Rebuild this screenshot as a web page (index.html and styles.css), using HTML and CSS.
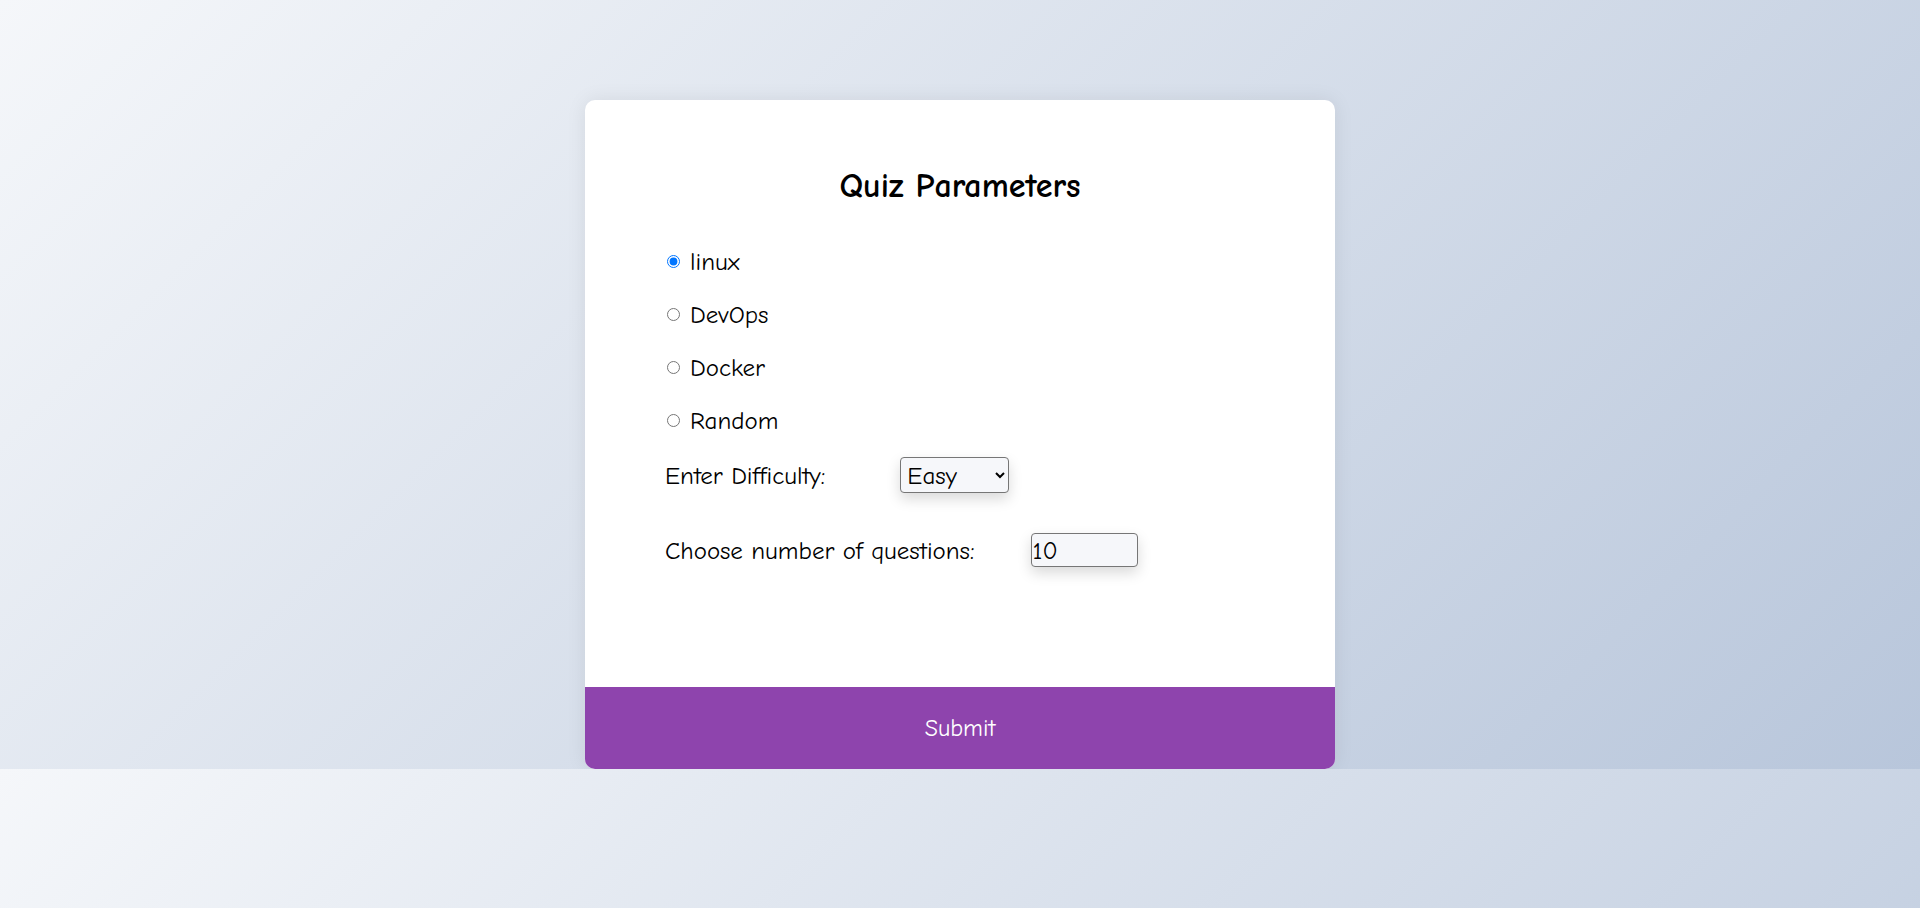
FILE: index.html
```html
<!DOCTYPE html>
<html lang="en">
<head>
<meta charset="utf-8">
<title>Quiz Parameters</title>
<link rel="stylesheet" href="styles.css">
</head>
<body>
<main class="page">
  <form class="card">
    <div class="card-body">
      <h2 class="title">Quiz Parameters</h2>
      <div class="topics">
        <label class="topic"><input type="radio" name="topic" value="linux" checked><span>linux</span></label>
        <label class="topic"><input type="radio" name="topic" value="DevOps"><span>DevOps</span></label>
        <label class="topic"><input type="radio" name="topic" value="Docker"><span>Docker</span></label>
        <label class="topic"><input type="radio" name="topic" value="Random"><span>Random</span></label>
      </div>
      <div class="field field-difficulty">
        <label class="field-label" for="difficulty">Enter Difficulty:</label>
        <select id="difficulty" class="select">
          <option>Easy</option>
          <option>Medium</option>
          <option>Hard</option>
        </select>
      </div>
      <div class="field field-count">
        <label class="field-label" for="count">Choose number of questions:</label>
        <input id="count" class="number" type="number" value="10">
      </div>
    </div>
    <button type="submit" class="submit">Submit</button>
  </form>
</main>
</body>
</html>
```

FILE: styles.css
```css
html {
  margin: 0;
}
body {
  margin: 0;
  background: linear-gradient(135deg, #f5f7fa 0%, #b8c6db 100%);
  font-family: "Comic Sans MS", "Comic Neue", "DejaVu Sans", sans-serif;
  color: #000;
}
.page {
  padding-top: 100px;
  display: flex;
  justify-content: center;
}
.card {
  width: 750px;
  background: #fff;
  border-radius: 10px;
  box-shadow: 0 0 20px rgba(0, 0, 0, 0.08);
  display: flex;
  flex-direction: column;
}
.card-body {
  padding: 66px 80px 0 80px;
  height: 587px;
  box-sizing: border-box;
}
.title {
  margin: 0;
  font-size: 34px;
  line-height: 40px;
  font-weight: bold;
  text-align: center;
}
.topics {
  margin-top: 29px;
  display: flex;
  flex-direction: column;
}
.topic {
  height: 53px;
  display: flex;
  align-items: center;
  font-size: 25px;
}
.topic input {
  width: 13px;
  height: 13px;
  margin: 0 10px 0 2px;
}
.field {
  display: flex;
  align-items: center;
  font-size: 25px;
}
.field-difficulty {
  height: 56px;
}
.field-difficulty .field-label {
  margin-right: 75px;
}
.field-count {
  height: 54px;
  margin-top: 20px;
}
.field-count .field-label {
  margin-right: 56px;
}
.select {
  width: 109px;
  height: 36px;
  font-family: inherit;
  font-size: 25px;
  color: #000;
  background-color: #f6f7fa;
  border: 1px solid #767676;
  border-radius: 4px;
  padding: 0 2px;
  box-shadow: 0 6px 14px rgba(0, 0, 0, 0.15);
}
.number {
  width: 107px;
  height: 34px;
  box-sizing: border-box;
  font-family: inherit;
  font-size: 25px;
  color: #000;
  background: #f6f7fa;
  border: 1px solid #767676;
  border-radius: 4px;
  padding: 0 1px;
  box-shadow: 0 6px 14px rgba(0, 0, 0, 0.15);
}
.submit {
  height: 82px;
  border: none;
  background: #8e44ad;
  color: #fff;
  font-family: inherit;
  font-size: 24px;
  border-radius: 0 0 10px 10px;
  cursor: pointer;
}
```
